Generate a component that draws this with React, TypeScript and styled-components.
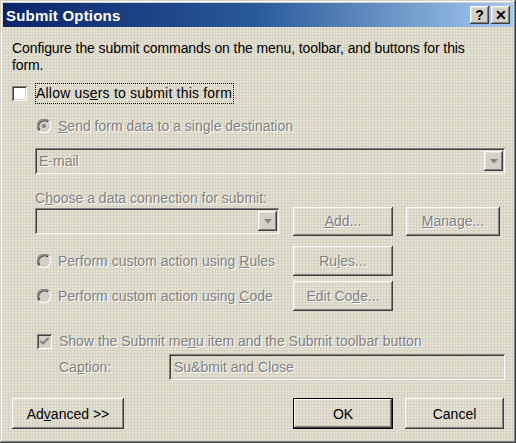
import * as React from 'react';
import styled, { createGlobalStyle, css } from 'styled-components';

const GlobalStyle = createGlobalStyle`
    html, body {
        margin: 0;
        padding: 0;
        background: #d4d0c8;
    }
    * {
        box-sizing: border-box;
    }
`;

const raised = css`
    box-shadow:
        inset -1px -1px #404040,
        inset 1px 1px #ffffff,
        inset -2px -2px #808080,
        inset 2px 2px #e4e0d8;
`;

const sunken = css`
    box-shadow:
        inset 1px 1px #808080,
        inset -1px -1px #ffffff,
        inset 2px 2px #404040,
        inset -2px -2px #d4d0c8;
`;

const Dialog = styled.div`
    width: 516px;
    height: 443px;
    padding: 3px;
    display: flex;
    flex-direction: column;
    font-family: "Liberation Sans", Arial, sans-serif;
    font-size: 14px;
    color: #000;
    background-color: #d5d1c9;
    background-image: radial-gradient(circle at 1px 1px, #e6e4cc 0.7px, transparent 1.2px);
    background-size: 3px 3px;
    box-shadow:
        inset -1px -1px #404040,
        inset 1px 1px #d4d0c8,
        inset -2px -2px #808080,
        inset 2px 2px #ffffff;
`;

const TitleBar = styled.div`
    height: 24px;
    flex: none;
    display: flex;
    align-items: center;
    justify-content: space-between;
    padding: 0 3px 0 3px;
    background: linear-gradient(to right, #0a246a, #2a5a9a 50%, #a6caf0);
`;

const Title = styled.span`
    color: #ffffff;
    font-weight: bold;
    font-size: 15px;
    letter-spacing: 0.2px;
`;

const TitleButtons = styled.div`
    display: flex;
    gap: 2px;
`;

const TitleButton = styled.div`
    width: 19px;
    height: 18px;
    background: #d4d0c8;
    display: flex;
    align-items: center;
    justify-content: center;
    font-weight: bold;
    font-size: 14px;
    line-height: 1;
    ${raised};
`;

const Body = styled.div`
    flex: 1;
    display: flex;
    flex-direction: column;
    padding: 0 8px 0 9px;
`;

const Description = styled.p`
    margin: 13px 0 0 0;
    line-height: 17px;
    letter-spacing: -0.1px;
`;

const AllowRow = styled.div`
    margin-top: 9px;
    height: 21px;
    display: flex;
    align-items: center;
    gap: 9px;
`;

const CheckBox = styled.div<{ disabled?: boolean }>`
    width: 15px;
    height: 15px;
    flex: none;
    display: flex;
    align-items: center;
    justify-content: center;
    background: ${props => props.disabled ? '#d4d0c8' : '#ffffff'};
    ${sunken};
`;

const FocusLabel = styled.span`
    outline: 1px dotted #000;
    padding: 1px 1px 2px 0;
    letter-spacing: 0.2px;
`;

const Group = styled.div`
    display: flex;
    flex-direction: column;
    padding-left: 23px;
`;

const Dim = styled.span`
    color: #808080;
    text-shadow: 1px 1px 0 #ffffff;
`;

const OptionRow = styled.div<{ top: number; height: number }>`
    margin-top: ${props => props.top}px;
    height: ${props => props.height}px;
    display: flex;
    align-items: center;
    gap: 7px;
    padding-left: 2px;
`;

const Combo = styled.div<{ width?: number; top: number }>`
    margin-top: ${props => props.top}px;
    width: ${props => props.width ? props.width + 'px' : '100%'};
    height: 26px;
    flex: none;
    display: flex;
    align-items: center;
    justify-content: space-between;
    padding: 2px 2px 2px 4px;
    ${sunken};
`;

const DropButton = styled.div`
    width: 19px;
    height: 20px;
    display: flex;
    align-items: center;
    justify-content: center;
    background: #d4d0c8;
    ${raised};
`;

const Label = styled.div`
    margin-top: 15px;
    height: 17px;
    display: flex;
    align-items: center;
`;

const ConnRow = styled.div`
    margin-top: 1px;
    display: flex;
    align-items: center;
    height: 28px;
`;

const Button = styled.div<{ width: number; height?: number; isDefault?: boolean }>`
    width: ${props => props.width}px;
    height: ${props => props.height || 29}px;
    flex: none;
    display: flex;
    align-items: center;
    justify-content: center;
    background: transparent;
    ${props => props.isDefault ? css`
        box-shadow:
            inset 0 0 0 1px #000000,
            inset -2px -2px #404040,
            inset 2px 2px #ffffff,
            inset -3px -3px #808080;
    ` : raised};
`;

const ActionRow = styled.div<{ top: number }>`
    margin-top: ${props => props.top}px;
    height: 30px;
    display: grid;
    grid-template-columns: 258px 100px;
    align-items: center;
`;

const RadioLabel = styled.div`
    display: flex;
    align-items: center;
    gap: 7px;
    padding-left: 2px;
`;

const CaptionRow = styled.div`
    margin-top: 4px;
    height: 26px;
    display: grid;
    grid-template-columns: 110px 1fr;
    align-items: center;
    padding-left: 24px;
`;

const TextField = styled.div`
    height: 26px;
    display: flex;
    align-items: center;
    padding-left: 5px;
    ${sunken};
`;

const Footer = styled.div`
    margin-top: 18px;
    display: flex;
    align-items: center;
`;

const Gap = styled.div<{ size: number }>`
    width: ${props => props.size}px;
    flex: none;
`;

const Radio: React.FC<{ checked?: boolean }> = ({ checked }) => (
    <svg width="14" height="14" viewBox="0 0 12 12" style={{ flex: 'none' }}>
        <circle cx="6" cy="6" r="5" fill="#d4d0c8" />
        <path d="M1.76 10.24 A6 6 0 0 1 10.24 1.76" stroke="#808080" strokeWidth="1" fill="none" />
        <path d="M10.24 1.76 A6 6 0 0 1 1.76 10.24" stroke="#ffffff" strokeWidth="1" fill="none" />
        <path d="M2.5 9.5 A5 5 0 0 1 9.5 2.5" stroke="#404040" strokeWidth="1" fill="none" />
        <path d="M9.5 2.5 A5 5 0 0 1 2.5 9.5" stroke="#d4d0c8" strokeWidth="1" fill="none" />
        {checked && <circle cx="6" cy="6" r="1.8" fill="#808080" />}
    </svg>
);

const Arrow: React.FC = () => (
    <svg width="8" height="5" viewBox="0 0 8 5">
        <path d="M0 0 H8 L4 4.5 Z" fill="#808080" />
    </svg>
);

const Check: React.FC = () => (
    <svg width="11" height="11" viewBox="0 0 11 11">
        <path d="M1.5 5 L4 7.5 L9.5 2" stroke="#808080" strokeWidth="2" fill="none" />
    </svg>
);

export default function App() {
    return (
        <>
            <GlobalStyle />
            <Dialog>
                <TitleBar>
                    <Title>Submit Options</Title>
                    <TitleButtons>
                        <TitleButton>?</TitleButton>
                        <TitleButton>✕</TitleButton>
                    </TitleButtons>
                </TitleBar>

                <Body>
                    <Description>
                        Configure the submit commands on the menu, toolbar, and buttons for this<br />form.
                    </Description>

                    <AllowRow>
                        <CheckBox />
                        <FocusLabel>Allow us<u>e</u>rs to submit this form</FocusLabel>
                    </AllowRow>

                    <Group>
                        <OptionRow top={12} height={20}>
                            <Radio checked />
                            <Dim><u>S</u>end form data to a single destination</Dim>
                        </OptionRow>

                        <Combo top={12}>
                            <Dim>E-mail</Dim>
                            <DropButton><Arrow /></DropButton>
                        </Combo>

                        <Label><Dim>C<u>h</u>oose a data connection for submit:</Dim></Label>

                        <ConnRow>
                            <Combo top={0} width={244}>
                                <span />
                                <DropButton><Arrow /></DropButton>
                            </Combo>
                            <Gap size={14} />
                            <Button width={100}><Dim><u>A</u>dd...</Dim></Button>
                            <Gap size={13} />
                            <Button width={94}><Dim><u>M</u>anage...</Dim></Button>
                        </ConnRow>

                        <ActionRow top={11}>
                            <RadioLabel>
                                <Radio />
                                <Dim>Perform custom action using <u>R</u>ules</Dim>
                            </RadioLabel>
                            <Button width={100} height={30}><Dim>Ru<u>l</u>es...</Dim></Button>
                        </ActionRow>

                        <ActionRow top={5}>
                            <RadioLabel>
                                <Radio />
                                <Dim>Perform custom action using <u>C</u>ode</Dim>
                            </RadioLabel>
                            <Button width={100} height={30}><Dim>Edit Co<u>d</u>e...</Dim></Button>
                        </ActionRow>

                        <OptionRow top={21} height={18}>
                            <CheckBox disabled><Check /></CheckBox>
                            <Dim>Show the Submit me<u>n</u>u item and the Submit toolbar button</Dim>
                        </OptionRow>

                        <CaptionRow>
                            <Dim>Ca<u>p</u>tion:</Dim>
                            <TextField><Dim>Su&amp;bmit and Close</Dim></TextField>
                        </CaptionRow>
                    </Group>

                    <Footer>
                        <Button width={112} height={31}>Ad<u>v</u>anced &gt;&gt;</Button>
                        <Gap size={169} />
                        <Button width={100} height={31} isDefault>OK</Button>
                        <Gap size={12} />
                        <Button width={99} height={31}>Cancel</Button>
                    </Footer>
                </Body>
            </Dialog>
        </>
    );
}
